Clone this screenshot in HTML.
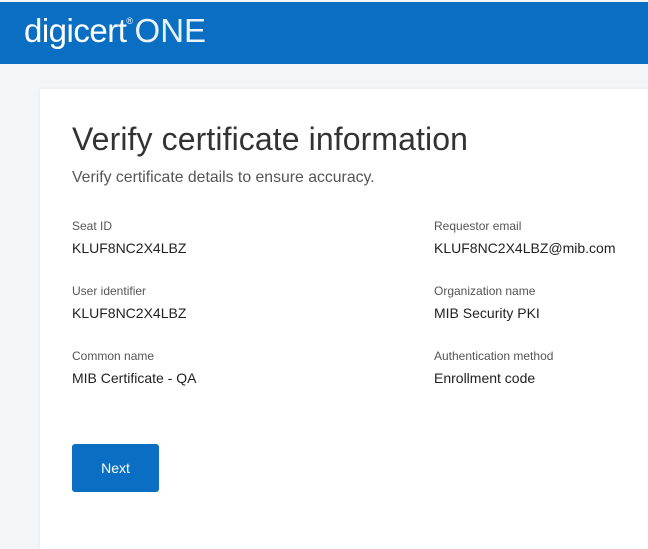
<!DOCTYPE html>
<html><head><style>
body{margin:0;width:648px;height:538px;overflow:hidden;background:#f4f5f7;font-family:"Liberation Sans",sans-serif;position:relative}
.hdr{position:absolute;left:0;top:2px;width:648px;height:62px;background:#0a6fc2}
.logo{position:absolute;left:24px;top:10px;color:#fff;font-size:33px;letter-spacing:-0.5px}
.logo b{font-weight:normal}
.logo sup{font-size:9px;vertical-align:top;position:relative;top:4px}
.logo span{font-weight:300;margin-left:2px;letter-spacing:0;opacity:.92}
.card{position:absolute;left:40px;top:89px;width:620px;height:460px;background:#fff;box-shadow:0 0 3px rgba(0,0,0,.08)}
h1{position:absolute;left:72px;top:121px;margin:0;font-weight:normal;font-size:32px;letter-spacing:0.1px;color:#333}
.sub{position:absolute;left:72px;top:169px;font-size:15.8px;color:#555}
.l{position:absolute;font-size:12px;color:#555}
.v{position:absolute;font-size:14px;color:#222}
.btn{position:absolute;left:72px;top:444px;width:87px;height:48px;background:#0a6fc2;border-radius:3px;color:#fff;font-size:14px;text-align:center;line-height:48px}
</style></head><body>
<div class="hdr"><div class="logo"><b>digicert</b><sup>®</sup><span>ONE</span></div></div>
<div class="card"></div>
<h1>Verify certificate information</h1>
<div class="sub">Verify certificate details to ensure accuracy.</div>
<div class="l" style="left:72px;top:219px">Seat ID</div>
<div class="v" style="left:72px;top:240px">KLUF8NC2X4LBZ</div>
<div class="l" style="left:72px;top:284px">User identifier</div>
<div class="v" style="left:72px;top:305px">KLUF8NC2X4LBZ</div>
<div class="l" style="left:72px;top:349px">Common name</div>
<div class="v" style="left:72px;top:370px">MIB Certificate - QA</div>
<div class="l" style="left:434px;top:219px">Requestor email</div>
<div class="v" style="left:434px;top:240px">KLUF8NC2X4LBZ@mib.com</div>
<div class="l" style="left:434px;top:284px">Organization name</div>
<div class="v" style="left:434px;top:305px">MIB Security PKI</div>
<div class="l" style="left:434px;top:349px">Authentication method</div>
<div class="v" style="left:434px;top:370px">Enrollment code</div>
<div class="btn">Next</div>
</body></html>
